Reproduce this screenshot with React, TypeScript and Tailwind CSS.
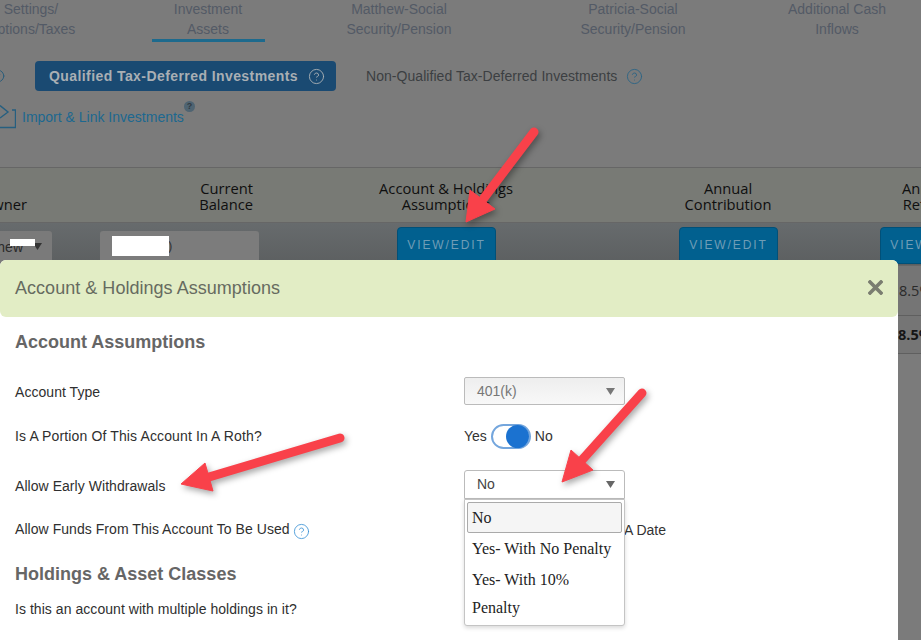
import { CircleHelp } from "lucide-react";

function Caret({ cls }: { cls: string }) {
  return (
    <svg width="9" height="7" viewBox="0 0 9 7" className={cls}>
      <path d="M0 0H9L4.5 7Z" fill="currentColor" />
    </svg>
  );
}

function Arrow({ shaft, head }: { shaft: string; head: string }) {
  return (
    <g>
      <path d={shaft} stroke="#f9414a" strokeWidth="9" strokeLinecap="round" fill="none" />
      <polygon points={head} fill="#f9414a" stroke="#f9414a" strokeWidth="1" strokeLinejoin="round" />
    </g>
  );
}

function NavItem({ a, b, w, active }: { a: string; b: string; w: string; active?: boolean }) {
  return (
    <div className={`${w} shrink-0 flex flex-col items-center text-center`}>
      <span className="whitespace-nowrap">{a}</span>
      <span className="whitespace-nowrap">{b}</span>
      {active && <span className="w-[113px] h-[3px] bg-[#1d6a8d]" />}
    </div>
  );
}

function HeadCell({ a, b, w, right }: { a: string; b: string; w: string; right?: boolean }) {
  return (
    <div className={`${w} shrink-0 flex flex-col ${right ? "items-end text-right" : "items-center text-center"}`}>
      <span className="whitespace-nowrap">{a}</span>
      <span className="whitespace-nowrap">{b}</span>
    </div>
  );
}

function ViewEdit({ ml }: { ml: string }) {
  return (
    <button className={`${ml} w-[99px] h-[37px] mt-1 shrink-0 rounded-t-[4px] bg-[#01608f] border border-[#015078] text-[#6f9db6] text-[12px] tracking-[1.9px] pb-[1px]`}>
      VIEW/EDIT
    </button>
  );
}

function FormRow({ h, label, children, cls }: { h: string; label: React.ReactNode; children?: React.ReactNode; cls?: string }) {
  return (
    <div className={`${h} flex items-center`}>
      <div className={`w-[449px] shrink-0 flex items-center text-[14px] text-[#2f2f2f] whitespace-nowrap ${cls ?? "tracking-[0.05px]"}`}>{label}</div>
      {children}
    </div>
  );
}

export default function App() {
  return (
    <div className="relative w-[921px] h-[640px] overflow-hidden bg-[#7b7b7b] font-['Liberation_Sans',sans-serif]">
      {/* Nav */}
      <div className="flex -mt-px -ml-[64px] h-[44px] text-[14px] leading-[20px] text-[#535a66]">
        <NavItem a="Settings/" b="Options/Taxes" w="w-[190px]" />
        <NavItem a="Investment" b="Assets" w="w-[164px]" active />
        <NavItem a="Matthew-Social" b="Security/Pension" w="w-[218px]" />
        <NavItem a="Patricia-Social" b="Security/Pension" w="w-[250px]" />
        <NavItem a="Additional Cash" b="Inflows" w="w-[158px]" />
      </div>

      {/* Tabs */}
      <div className="flex items-center h-[30px] mt-[18px]">
        <CircleHelp size={14} strokeWidth={1.5} className="-ml-[9px] text-[#255a7a] shrink-0" />
        <div className="ml-[30px] w-[301px] h-[30px] rounded-[4px] bg-[#1a4a72] flex items-center pl-[14px] text-[14px] font-bold tracking-[0.42px] text-[#a9afb4] whitespace-nowrap">
          Qualified Tax-Deferred Investments
          <CircleHelp size={17} strokeWidth={1.3} className="ml-[10px] text-[#a9afb4]" />
        </div>
        <span className="ml-[30px] text-[14px] tracking-[0.05px] text-[#3c3f42] whitespace-nowrap">Non-Qualified Tax-Deferred Investments</span>
        <CircleHelp size={17} strokeWidth={1.3} className="ml-[9px] text-[#2c6485]" />
      </div>

      {/* Import */}
      <div className="relative flex items-center h-[28px] mt-[12px]">
        <svg width="22" height="24" viewBox="0 0 22 24" className="-ml-[6px] shrink-0 text-[#265f80]" fill="none" stroke="currentColor" strokeWidth="1.4">
          <path d="M6 0.5L14 7L6 13" />
          <path d="M18 5H21.5V22.5H0" />
        </svg>
        <span className="ml-[6px] text-[14px] text-[#1c6890] whitespace-nowrap">Import &amp; Link Investments</span>
        <span className="absolute left-[184px] top-[-2px] w-[11px] h-[11px] rounded-full bg-[#4f6472] text-[#2f3a42] text-[9px] font-bold leading-[11px] text-center">?</span>
      </div>

      {/* Table head */}
      <div className="flex mt-[36px] h-[56px] pt-[12px] border-t border-[#666] border-b bg-[#787a75] text-[14.7px] leading-[16px] text-[#0f0f0f] font-['Open_Sans',sans-serif]">
        <HeadCell a={"\u00a0"} b="Owner" w="w-[27px]" right />
        <HeadCell a="Current" b="Balance" w="w-[226px]" right />
        <HeadCell a="Account & Holdings" b="Assumptions" w="w-[386px]" />
        <HeadCell a="Annual" b="Contribution" w="w-[178px]" />
        <HeadCell a="Annual" b="Return" w="w-[218px]" />
      </div>

      {/* Table row */}
      <div className="flex h-[43px] bg-gradient-to-b from-[#676b6d] to-[#5c5f60] border-b border-[#666]">
        <div className="relative -ml-[30px] w-[82px] h-[35px] mt-2 shrink-0 rounded-t-[3px] bg-[#7a7a7a] flex items-center justify-end pr-[10px] text-[14px] text-[#2b2b2b] pb-[5px]">
          <span className="mr-[10px] mt-[3px]">hew</span>
          <Caret cls="text-[#333]" />
          <span className="absolute left-[40px] top-[8px] w-[25px] h-[7px] bg-white" />
        </div>
        <div className="relative ml-[48px] w-[159px] h-[35px] mt-2 shrink-0 rounded-t-[3px] bg-[#7c7c7c] flex items-center pl-[68px] pb-[5px] text-[13px] text-[#333]">
          <span>)</span>
          <span className="absolute left-[12px] top-[5px] w-[57px] h-[20px] bg-white" />
        </div>
        <ViewEdit ml="ml-[138px]" />
        <ViewEdit ml="ml-[183px]" />
        <ViewEdit ml="ml-[102px]" />
      </div>

      {/* Table values */}
      <div className="h-[50px] pl-[899px] bg-[#757575] border-b border-[#5f5f5f] flex items-center text-[14.5px] text-[#2a2a2a] font-['Open_Sans',sans-serif]">8.5%</div>
      <div className="h-[38px] pl-[898px] bg-[#757575] border-b border-[#5f5f5f] flex items-center text-[14.5px] font-bold text-[#161616] font-['Open_Sans',sans-serif]">8.5%</div>

      {/* Modal */}
      <div className="absolute left-0 top-[260px] w-[898px] h-[400px] bg-white rounded-t-[6px]">
        <div className="h-[57px] rounded-[6px] bg-[#e2edc5] flex items-center justify-between pl-[15px] pr-[15px]">
          <span className="text-[18px] tracking-[0.03px] text-[#666b60]">Account &amp; Holdings Assumptions</span>
          <svg width="15" height="15" viewBox="0 0 15 15" className="-mt-[3px]" stroke="#7a7d70" strokeWidth="3.6" strokeLinecap="square">
            <path d="M2 2L13 13M13 2L2 13" />
          </svg>
        </div>
        <div className="pl-[15px]">
          <div className="h-[50px] pt-[1px] flex items-center text-[18px] font-bold text-[#666]">Account Assumptions</div>
          <div className="h-[3px]" />
          <FormRow h="h-[44px]" label="Account Type">
            <div className="w-[161px] h-[28px] -mt-[2px] rounded-[2px] border border-[#bbb] bg-gradient-to-b from-[#eee] to-[#f8f8f8] flex items-center justify-between pl-[12px] pr-[9px] text-[14px] text-[#777]">
              401(k)
              <Caret cls="text-[#777]" />
            </div>
          </FormRow>
          <FormRow h="h-[44px]" label="Is A Portion Of This Account In A Roth?" cls="tracking-[0.13px]">
            <span className="text-[14px] text-[#333]">Yes</span>
            <div className="ml-[4px] w-[40px] h-[25px] rounded-full border-2 border-[#74a6dd] bg-white flex items-center justify-end">
              <span className="w-[23px] h-[23px] rounded-full bg-[#1b72d0]" />
            </div>
            <span className="ml-[4px] text-[14px] text-[#333]">No</span>
          </FormRow>
          <FormRow h="h-[56px]" label="Allow Early Withdrawals">
            <div className="w-[161px] h-[29px] -mt-[4px] rounded-t-[3px] border border-[#bbb] bg-white flex items-center justify-between pl-[12px] pr-[9px] text-[14px] text-[#444]">
              No
              <Caret cls="text-[#666]" />
            </div>
          </FormRow>
          <FormRow
            h="h-[30px]"
            label={
              <>
                Allow Funds From This Account To Be Used
                <CircleHelp size={17} strokeWidth={1.2} className="ml-[3px] mt-[5px] text-[#3d93d6]" />
              </>
            }
          >
            <span className="pl-[160px] mt-[2px] text-[14px] text-[#333] whitespace-nowrap">A Date</span>
          </FormRow>
          <div className="h-[40px] mt-[10px] flex items-center text-[18px] font-bold text-[#666]">Holdings &amp; Asset Classes</div>
          <FormRow h="h-[30px]" label="Is this an account with multiple holdings in it?" />
        </div>

        {/* Open dropdown */}
        <div className="absolute left-[464px] top-[239px] w-[161px] h-[127px] rounded-b-[3px] border border-[#c4c4c4] bg-white shadow-[0_2px_4px_rgba(0,0,0,0.15)] p-[2px] font-['Liberation_Serif',serif] text-[16px] text-[#222]">
          <div className="h-[31px] rounded-[2px] border border-[#aaa] bg-[#f5f5f5] flex items-center pl-[4px]">No</div>
          <div className="h-[30px] flex items-center pl-[5px] mt-[1px] whitespace-nowrap">Yes- With No Penalty</div>
          <div className="h-[31px] flex items-center pl-[5px] whitespace-nowrap">Yes- With 10%</div>
          <div className="h-[25px] flex items-center pl-[5px] whitespace-nowrap">Penalty</div>
        </div>
      </div>

      {/* Annotation arrows */}
      <svg className="absolute inset-0 pointer-events-none drop-shadow-[2px_3px_3px_rgba(0,0,0,0.35)]" width="921" height="640" viewBox="0 0 921 640">
        <Arrow shaft="M534 132L484 198" head="466,222 470,190 495,209" />
        <Arrow shaft="M340 438L209 477" head="181,484 205,463 213,491" />
        <Arrow shaft="M642 393L582 460" head="562,482 571,450 593,470" />
      </svg>
    </div>
  );
}
